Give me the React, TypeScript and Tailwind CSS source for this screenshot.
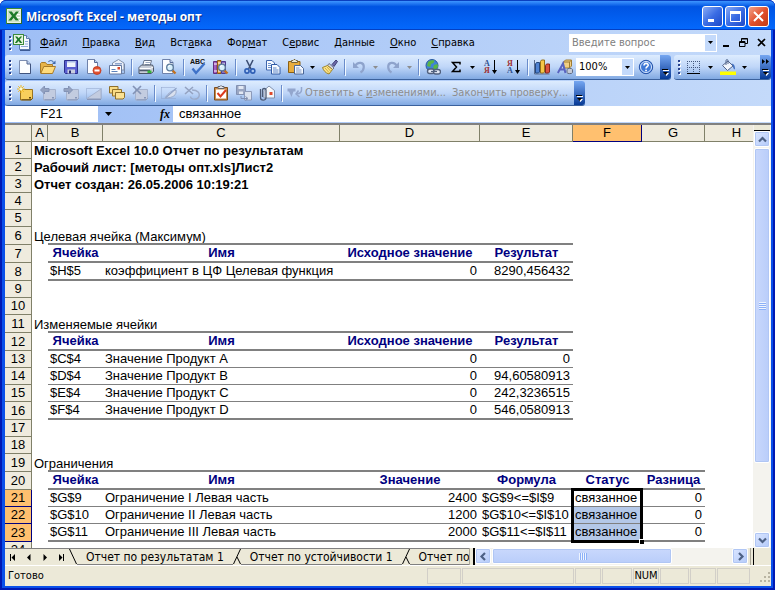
import type { ReactNode } from 'react';
import { clsx } from 'clsx';

type Line = 'none' | 'thin' | 'thick';
type Cell = { text: string; align?: 'left' | 'center' | 'right'; head?: boolean; bold?: boolean };
type Row = {
  n: number;
  tall?: boolean;
  line?: Line;
  until?: string;
  cells?: Record<string, Cell>;
};

const COLUMNS = [
  { id: 'A', width: 'w-4' },
  { id: 'B', width: 'w-[55px]' },
  { id: 'C', width: 'w-[237px]' },
  { id: 'D', width: 'w-[140px]' },
  { id: 'E', width: 'w-[93px]' },
  { id: 'F', width: 'w-[69px]' },
  { id: 'G', width: 'w-[63px]' },
  { id: 'H', width: 'w-16' },
];

const title = (text: string): Record<string, Cell> => ({ A: { text, bold: true } });
const section = (text: string): Record<string, Cell> => ({ A: { text } });
const head = (text: string): Cell => ({ text, head: true, align: 'center' });
const num = (text: string): Cell => ({ text, align: 'right' });

const resultHead = {
  B: head('Ячейка'),
  C: head('Имя'),
  D: head('Исходное значение'),
  E: head('Результат'),
};

const ROWS: Row[] = [
  { n: 1, cells: title('Microsoft Excel 10.0 Отчет по результатам') },
  { n: 2, cells: title('Рабочий лист: [методы опт.xls]Лист2') },
  { n: 3, cells: title('Отчет создан: 26.05.2006 10:19:21') },
  { n: 4 },
  { n: 5 },
  { n: 6, tall: true, line: 'thick', until: 'E', cells: section('Целевая ячейка (Максимум)') },
  { n: 7, tall: true, line: 'thick', until: 'E', cells: resultHead },
  {
    n: 8,
    tall: true,
    line: 'thick',
    until: 'E',
    cells: { B: { text: '$H$5' }, C: { text: 'коэффициент в ЦФ Целевая функция' }, D: num('0'), E: num('8290,456432') },
  },
  { n: 9 },
  { n: 10 },
  { n: 11, tall: true, line: 'thick', until: 'E', cells: section('Изменяемые ячейки') },
  { n: 12, tall: true, line: 'thick', until: 'E', cells: resultHead },
  {
    n: 13,
    line: 'thin',
    until: 'E',
    cells: { B: { text: '$C$4' }, C: { text: 'Значение Продукт A' }, D: num('0'), E: num('0') },
  },
  {
    n: 14,
    line: 'thin',
    until: 'E',
    cells: { B: { text: '$D$4' }, C: { text: 'Значение Продукт B' }, D: num('0'), E: num('94,60580913') },
  },
  {
    n: 15,
    line: 'thin',
    until: 'E',
    cells: { B: { text: '$E$4' }, C: { text: 'Значение Продукт C' }, D: num('0'), E: num('242,3236515') },
  },
  {
    n: 16,
    tall: true,
    line: 'thick',
    until: 'E',
    cells: { B: { text: '$F$4' }, C: { text: 'Значение Продукт D' }, D: num('0'), E: num('546,0580913') },
  },
  { n: 17 },
  { n: 18 },
  { n: 19, tall: true, line: 'thick', until: 'G', cells: section('Ограничения') },
  {
    n: 20,
    tall: true,
    line: 'thick',
    until: 'G',
    cells: {
      B: head('Ячейка'),
      C: head('Имя'),
      D: head('Значение'),
      E: head('Формула'),
      F: head('Статус'),
      G: head('Разница'),
    },
  },
  {
    n: 21,
    line: 'thin',
    until: 'G',
    cells: {
      B: { text: '$G$9' },
      C: { text: 'Ограничение I Левая часть' },
      D: num('2400'),
      E: { text: '$G$9<=$I$9' },
      F: { text: 'связанное' },
      G: num('0'),
    },
  },
  {
    n: 22,
    line: 'thin',
    until: 'G',
    cells: {
      B: { text: '$G$10' },
      C: { text: 'Ограничение II Левая часть' },
      D: num('1200'),
      E: { text: '$G$10<=$I$10' },
      F: { text: 'связанное' },
      G: num('0'),
    },
  },
  {
    n: 23,
    tall: true,
    line: 'thick',
    until: 'G',
    cells: {
      B: { text: '$G$11' },
      C: { text: 'Ограничение III Левая часть' },
      D: num('2000'),
      E: { text: '$G$11<=$I$11' },
      F: { text: 'связанное' },
      G: num('0'),
    },
  },
  { n: 24 },
];

const MENU = [
  ['', 'Ф', 'айл'],
  ['', 'П', 'равка'],
  ['', 'В', 'ид'],
  ['Вст', 'а', 'вка'],
  ['Фор', 'м', 'ат'],
  ['С', 'е', 'рвис'],
  ['', 'Д', 'анные'],
  ['', 'О', 'кно'],
  ['', 'С', 'правка'],
];

const Icon = ({ children }: { children: ReactNode }) => (
  <svg viewBox="0 0 16 16" className="size-4 shrink-0" fill="none" aria-hidden="true">
    {children}
  </svg>
);

const Lens = () => (
  <>
    <path d="M11.5 11.5l3 3" stroke="#c07020" strokeWidth="2.4" />
    <circle cx="9" cy="8.5" r="3.3" fill="#d8f0fc" stroke="#5a7898" strokeWidth="1.3" />
    <path d="M7.3 8a2 2 0 0 1 1.7-1.5" stroke="#fff" />
  </>
);

const ExcelLogo = () => (
  <svg viewBox="0 0 16 16" className="size-4 shrink-0" fill="none" aria-hidden="true">
    <rect x=".5" y=".5" width="15" height="15" fill="#e9f4e4" stroke="#3f8a3a" />
    <path d="M2 14V2h12v12z" fill="#cfe3c8" />
    <path d="M10 4h4M10.500 6.500h3.500M11 9.500h3M10 12.500h4" stroke="#fff" />
    <path d="M2.500 3.500h3.300l2 2.700 2.200-2.700h3l-3.600 4.500 3.600 4.600H9.800L7.600 9.800 5.400 12.600H2.300L6 8z" fill="#1f7a2a" />
    <path d="M1 15.500h14.500V1" stroke="#2c662c" />
  </svg>
);

const WorkbookIcon = () => (
  <svg viewBox="0 0 18 17" className="h-[17px] w-[18px] shrink-0" fill="none" aria-hidden="true">
    <path d="M6.500 1.500h7l3 3v11h-10z" fill="#f4f8ff" stroke="#5a7ab0" />
    <path d="M13.500 1.500v3h3" fill="#c5d8f2" stroke="#5a7ab0" />
    <path d="M8 12.500h7M12 7.500h3M12 10h3" stroke="#90acd8" />
    <path d="M17 5v11.500H7" stroke="#3c5a94" />
    <rect x=".5" y=".5" width="10" height="10" fill="#e6f3df" stroke="#3c8a3c" />
    <path d="M2 2.500h2.200l1.500 1.700 1.500-1.700h2L6.700 5.500 9.300 9H7L5.500 7 4 9H1.800l2.500-3.500z" fill="#1f7a2a" />
  </svg>
);

const NewIcon = () => (
  <Icon>
    <path d="M2.500 1.500h7.500l3.500 3.500v9.500h-11z" fill="#fdfeff" stroke="#7c8db0" />
    <path d="M13.500 5v9.500h-11" stroke="#40547e" />
    <path d="M10 1.500V5h3.500" fill="#b9cdec" stroke="#50658f" />
  </Icon>
);

const OpenIcon = () => (
  <Icon>
    <path d="M.5 14V4.500l1-1h4l1.500 2h5.500V8" fill="#e7b44a" stroke="#a87b28" />
    <path d="M.8 14.500L3.800 7.500h11.700L12.500 14.500z" fill="#ffdb7c" stroke="#a87b28" />
    <path d="M8.500 3c1-2 4-2.200 5 .5" stroke="#4f79b8" strokeWidth="1.200" />
    <path d="M15.500 1.500v3.500H12z" fill="#3f68aa" />
  </Icon>
);

const SaveIcon = () => (
  <Icon>
    <path d="M1.500 1.500h13v13h-12l-1-1z" fill="#5a5fd0" stroke="#2a2e8c" />
    <path d="M4 2h8.500v6H4z" fill="#eef3fb" />
    <path d="M4 2h8.500v1.500H4z" fill="#a9bbe6" />
    <path d="M4.500 10.500h7.500v4H4.500z" fill="#c9cfe0" />
    <path d="M6 11.500h2v3H6z" fill="#272a70" />
  </Icon>
);

const PermissionIcon = () => (
  <Icon>
    <path d="M1.500.5h7l3 3v11h-10z" fill="#fcfdff" stroke="#6f82aa" />
    <path d="M8.500.5v3h3" fill="#c2d3ee" stroke="#566b98" />
    <circle cx="11" cy="11.500" r="4" fill="#e2502e" stroke="#c03a1c" strokeWidth=".8" />
    <path d="M8.500 11.500h5" stroke="#fff" strokeWidth="1.800" />
  </Icon>
);

const MailIcon = () => (
  <Icon>
    <path d="M3.500 6V4L9.500.5l5.500 3.500v7H9" fill="#eef2f9" stroke="#8090ab" />
    <path d="M6 4.500h7M6 6h7" stroke="#8fa5cc" />
    <path d="M.5 6.500h12v8.500H.5z" fill="#fff" stroke="#65799f" />
    <path d="M8.500 8h2.500v2.500H8.500z" fill="#d8452a" />
    <path d="M2.500 10.500h4M2.500 12.500h6" stroke="#5d82bb" />
    <path d="M13 14.500h2.500V5" stroke="#7487a8" />
  </Icon>
);

const PrintIcon = () => (
  <Icon>
    <path d="M4.500 7L6 1.500h7.500L12 7z" fill="#fff" stroke="#68758c" />
    <path d="M7.500 3.500H12M7 5.500h4.500" stroke="#9cabc4" />
    <path d="M1 8.500l2.500-2.500h11l1 2.500v4l-2.500 2H1z" fill="#c9ced8" stroke="#4b5567" />
    <path d="M1.500 9.500h11l2.500-1.500" stroke="#fff" />
    <path d="M1.500 11.500H12" stroke="#4d586b" strokeWidth="1.500" />
    <path d="M9.500 11.500h4v2.500h-4z" fill="#35b53a" />
  </Icon>
);

const PreviewIcon = () => (
  <Icon>
    <path d="M1.500.5h7.500l3 3v11H1.500z" fill="#fcfdff" stroke="#6f82aa" />
    <path d="M9 .5v3h3" fill="#c2d3ee" stroke="#566b98" />
    <Lens />
  </Icon>
);

const SpellIcon = () => (
  <Icon>
    <text x="0" y="5" fontSize="7" fontWeight="bold" fontFamily="Liberation Sans, sans-serif" fill="#111">
      ABC
    </text>
    <path d="M2.500 9.500l3.500 4.500L14.500 4.500" stroke="#3f72c8" strokeWidth="2.400" />
  </Icon>
);

const ResearchIcon = () => (
  <Icon>
    <path d="M.5 2.500h3.500v12H.5z" fill="#a65fbf" stroke="#5f2f7c" />
    <path d="M4.500 1.500h3.500v13H4.500z" fill="#e9a13b" stroke="#8e5a17" />
    <path d="M8.500 2.500h4v12h-4z" fill="#8a6fc0" stroke="#4c3a8f" />
    <path d="M1 5h3M5 4h3M9 5h3M1 12h3M5 12h3" stroke="#fff" />
    <Lens />
  </Icon>
);

const CutIcon = () => (
  <Icon>
    <path d="M4.500 1l4.500 9M11 1L6.500 10" stroke="#3e5075" strokeWidth="1.600" />
    <circle cx="5" cy="12" r="2.100" stroke="#2f5fb5" strokeWidth="1.600" />
    <circle cx="10.800" cy="12" r="2.100" stroke="#2f5fb5" strokeWidth="1.600" />
  </Icon>
);

const CopyIcon = () => (
  <Icon>
    <path d="M1.500 1.500h5.500l2.500 2.500v7h-8z" fill="#f8fbff" stroke="#3e66ad" />
    <path d="M3 4.500h3M3 6.500h4M3 8.500h4" stroke="#6e93cf" />
    <path d="M6.500 5.500h5.500l3 3v6.500h-8.500z" fill="#f8fbff" stroke="#2f5aa5" />
    <path d="M8 9h3.500M8 11h5.500M8 13h5.500" stroke="#5b84c7" />
  </Icon>
);

const PasteIcon = () => (
  <Icon>
    <path d="M.5 2.500h11.500v11H.5z" fill="#e8ac3c" stroke="#8b6014" />
    <path d="M3.500 3.500v-2h1.500L6 .5h1l1 1h1.500v2z" fill="#f1ecd6" stroke="#76653a" />
    <path d="M6.500 6.500h6l3 3v5.500h-9z" fill="#f5f9ff" stroke="#4b6797" />
    <path d="M8 9h3.500M8 11h5.500M8 13h5.500" stroke="#7c98c6" />
  </Icon>
);

const PainterIcon = () => (
  <Icon>
    <path d="M10 5.500l4-4.500 1.500 1.500-3.500 5z" fill="#6c6aa8" stroke="#3d3c74" />
    <path d="M7 4.500l5 4.500-1.500 1.500-5-4z" fill="#d9dce8" stroke="#6d7186" />
    <path d="M5.500 6.500L.5 8.500c1 3 3 5.500 6.500 6.500l3.500-4.500z" fill="#fbe48b" stroke="#a08425" />
    <path d="M3 9l4 4.500M5 8l3.500 4" stroke="#d1ab3d" />
  </Icon>
);

const UndoIcon = ({ flip }: { flip?: boolean }) => (
  <Icon>
    <g transform={flip ? 'translate(16 0) scale(-1 1)' : undefined}>
      <path d="M4.500 6.500C7 2.500 13 3 12.800 8c-.1 2.800-1.600 4.500-3.300 5.500" stroke="#8ea3cc" strokeWidth="2.200" />
      <path d="M2 3v6h6z" fill="#8ea3cc" />
    </g>
  </Icon>
);

const LinkIcon = () => (
  <Icon>
    <circle cx="7" cy="6.500" r="6" fill="#3f83d8" stroke="#285a9e" />
    <path d="M3 3c2-2 5-2 6.500-1.500L8.500 4 6 5 5.500 8 2 7zM9 6l3.500-1 .5 3-2.500 3L8 9z" fill="#58b548" />
    <rect x="2.500" y="10" width="7" height="4.500" rx="2.200" stroke="#51617e" strokeWidth="1.400" fill="#e3e9f5" />
    <rect x="8.500" y="10.500" width="7" height="4.500" rx="2.200" stroke="#51617e" strokeWidth="1.400" fill="#e3e9f5" />
    <path d="M6 12.500h6" stroke="#51617e" strokeWidth="1.200" />
  </Icon>
);

const SigmaIcon = () => (
  <Icon>
    <path d="M12 5.500V3.500H4.500l4 4.500-4 4.500H12v-2" stroke="#000" strokeWidth="1.500" />
  </Icon>
);

const SortIcon = ({ desc }: { desc?: boolean }) => (
  <Icon>
    <g fontSize="8" fontWeight="bold" fontFamily="Liberation Serif, serif">
      <text x="2" y="7" fill={desc ? '#a03030' : '#30508f'}>
        {desc ? 'Я' : 'А'}
      </text>
      <text x="2" y="14" fill={desc ? '#30508f' : '#a03030'}>
        {desc ? 'А' : 'Я'}
      </text>
    </g>
    <path d="M12.500 1v12" stroke="#000" />
    <path d="M10 11h5l-2.500 4z" fill="#000" />
  </Icon>
);

const ChartIcon = () => (
  <Icon>
    <path d="M.5 1v14h15" stroke="#5d6e8f" />
    <path d="M1.500 5l1-1.500h3V13l-1 1h-3z" fill="#4f82d2" stroke="#25487f" />
    <path d="M6.500 2.500l1-1.500h3v12l-1 1h-3z" fill="#f5c648" stroke="#96701a" />
    <path d="M11.500 6.500l1-1.500h3v8l-1 1h-3z" fill="#dc5340" stroke="#87261a" />
  </Icon>
);

const DrawingIcon = () => (
  <Icon>
    <path d="M6.500 3l2-2h6v6l-2 2h-6z" fill="#f2cf83" stroke="#a07c31" />
    <path d="M6.500 3h6v6M12.500 3l2-2" stroke="#a07c31" />
    <path d="M10 10.500c0-1.500 5.500-1.500 5.500 0v3c0 1.500-5.500 1.500-5.500 0z" fill="#c5cbd8" stroke="#616c83" />
    <path d="M.8 14L6 4.500 8.500 14M3 10.500h5" stroke="#5a63c0" strokeWidth="2" />
  </Icon>
);

const HelpIcon = () => (
  <Icon>
    <circle cx="8" cy="8" r="6.700" fill="#3e78d6" stroke="#2553a8" />
    <circle cx="8" cy="8" r="5.500" stroke="#dce9fc" />
    <path d="M6 6.500c0-3 4.300-2.500 4.200-.3C10.100 7.600 8 7.800 8 9.500" stroke="#fff" strokeWidth="1.600" />
    <path d="M7.200 10.700h1.700v1.600H7.200z" fill="#fff" />
  </Icon>
);

const BordersIcon = () => (
  <Icon>
    <path d="M1.500 2v12M7.500 2v12M13.500 2v12M1 2.500h13M1 8.500h13" stroke="#44597f" strokeDasharray="1 1" />
    <path d="M1 14.500h13" stroke="#000" />
  </Icon>
);

const FillIcon = () => (
  <Icon>
    <path d="M2.500 6.500L8 2l5 5-5.500 4.500z" fill="#f1f5fc" stroke="#53658a" />
    <path d="M6 6V1.500C6 .3 8 .3 8 1.500V5" stroke="#53658a" />
    <path d="M11.500 4.500c3 .5 3.500 2.500 3.500 6-1.500-.5-2-1.500-2-3.500z" fill="#3f6fc2" />
    <path d="M0 12.500h16v3.500H0z" fill="#ffff00" />
  </Icon>
);

// comment card used by the review toolbar, greyed out when the command is off
const Card = ({ off, children }: { off?: boolean; children?: ReactNode }) => (
  <Icon>
    <path
      d="M3.500 4.500h12v9l-1.500 1.500h-10.500z"
      fill={off ? '#c3cce0' : '#f7cf5c'}
      stroke={off ? '#a5b2cd' : '#9a7420'}
    />
    <path d="M4.500 14.800h9.500l1.500-1.500" stroke={off ? '#8796b8' : '#5e4510'} />
    <path d="M12 12h2v1.500h-2z" fill={off ? '#8796b8' : '#5e4510'} />
    {children}
  </Icon>
);

const NewNoteIcon = () => (
  <Card>
    <path d="M4 0v8M0 4h8M1.200 1.200l5.600 5.600M6.800 1.200L1.200 6.800" stroke="#f0b820" />
    <circle cx="4" cy="4" r="1.500" fill="#fffbd0" />
  </Card>
);

const PrevNoteIcon = ({ next }: { next?: boolean }) => (
  <Card off>
    <path d={next ? 'M9.500 5L5.500 1v2.500H1v3h4.500V9z' : 'M.5 5l4-4v2.500H9v3H4.500V9z'} fill="#94a2c0" stroke="#8393b5" />
  </Card>
);

const ShowNoteIcon = () => (
  <Icon>
    <path d="M.5 3.500h15v10H.5z" stroke="#8fa3c8" strokeDasharray="1 1" />
    <path d="M1 13.500L15 4v9.500z" fill="#c3cce0" stroke="#a5b2cd" />
    <path d="M1 14.500h14" stroke="#8796b8" />
  </Icon>
);

const AllNotesIcon = () => (
  <Icon>
    <path d="M.5 1.500h8.500v5l-1.500 1.500H.5z" fill="#f9dc85" stroke="#8f702a" />
    <path d="M3.500 4.500h9v5l-1.500 1.500h-7.500z" fill="#f9dc85" stroke="#8f702a" />
    <path d="M6.500 7.500h9v5l-1.500 1.500h-7.500z" fill="#fbe294" stroke="#8f702a" />
  </Icon>
);

const DeleteNoteIcon = () => (
  <Card off>
    <path d="M1 1l8 8M9 1L1 9" stroke="#8393b5" strokeWidth="1.700" />
  </Card>
);

const InkIcon = () => (
  <Icon>
    <path d="M.5 2.500h14M.5 2.500v11h14" stroke="#8fa3c8" strokeDasharray="1 1" />
    <path d="M4 13c4-6 8-8 11-8 1 5-3 8-11 8z" fill="#d9e0ee" stroke="#9cabc9" />
    <path d="M5 12.500L15.500 3" stroke="#8fa3c8" strokeWidth="1.200" />
  </Icon>
);

const EraseInkIcon = () => (
  <Icon>
    <path d="M1 2l8 7M9 2L1 9" stroke="#94a2c0" strokeWidth="1.600" />
    <path d="M8 5c6 0 8 3 7 6.500S7 15 6.500 11.500" stroke="#9cabc9" strokeWidth="1.400" />
  </Icon>
);

const TaskIcon = () => (
  <Icon>
    <path d="M1.500 2.500h13v12.500h-13z" fill="#cc8c48" stroke="#7c4d1e" />
    <path d="M3 4.500h10v9H3z" fill="#fff" />
    <path d="M5 3.500v-2h2L8 .5l1 1h2v2z" fill="#e6e6ea" stroke="#65656e" />
    <path d="M4.500 8l3 3.500L13 5" stroke="#dc3a1e" strokeWidth="2" />
  </Icon>
);

const SaveVersionIcon = () => (
  <Icon>
    <path d="M.5.500h9v9h-9z" fill="#9aa6c2" stroke="#8291b2" />
    <path d="M2.500 1h5v3h-5zM3 6.500h4V9H3z" fill="#e2e8f3" />
    <path d="M8.500 6.500h7V15h-7z" fill="#d9e1ef" stroke="#8c9aba" />
    <path d="M5 11v2.500h6M9.500 11.500l2.500 2-2.500 2" stroke="#7f8eb0" />
  </Icon>
);

const AttachIcon = () => (
  <Icon>
    <path d="M5 5.500L10 1l5.500 4.500V13H5z" fill="#f4f7fb" stroke="#8090ab" />
    <path d="M10.500 7h3v3h-3z" fill="#df4a2c" />
    <path d="M1.500 4v8.500c0 3.500 5.500 3.500 5.500 0V5c0-2-3.500-2-3.500 0v7" stroke="#4c5b76" strokeWidth="1.300" />
  </Icon>
);

const ReplyIcon = () => (
  <Icon>
    <path d="M.5 3.500h8v3H6.500L4.500 12 2 6.500H.5z" fill="#93a6cd" />
    <path d="M14.500 2v3c0 2.500-1.500 3.500-5 4M11.500 5.500L9 9l3.500 3" stroke="#93a6cd" strokeWidth="1.500" />
  </Icon>
);

const Arrow = ({ className }: { className?: string }) => (
  <svg viewBox="0 0 5 3" className={clsx('h-[3px] w-[5px] shrink-0', className)} aria-hidden="true">
    <path d="M0 0h5L2.500 3z" fill="currentColor" />
  </svg>
);

const Tool = ({ label, off, children }: { label: string; off?: boolean; children: ReactNode }) => (
  <button type="button" aria-label={label} disabled={off} className="flex h-full w-[23px] shrink-0 items-center justify-center">
    {children}
  </button>
);

const DropArrow = ({ label, off }: { label: string; off?: boolean }) => (
  <button
    type="button"
    aria-label={label}
    disabled={off}
    className={clsx('flex h-full w-[11px] shrink-0 items-center justify-center', off ? 'text-[#8d8d8d]' : 'text-black')}
  >
    <Arrow />
  </button>
);

const Grip = () => (
  <div className="ml-1 flex w-1 shrink-0 flex-col gap-[2px]">
    {[0, 1, 2, 3].map((i) => (
      <span key={i} className="size-[2px] bg-[#27418e] shadow-[1px_1px_0_#fff]" />
    ))}
  </div>
);

const Separator = () => (
  <div className="flex w-[6px] shrink-0 justify-center">
    <span className="h-4 w-px bg-[#6a8ccb] shadow-[1px_1px_0_#f1f9ff]" />
  </div>
);

const ToolbarEnd = ({ more }: { more?: boolean }) => (
  <button
    type="button"
    aria-label="Параметры панелей инструментов"
    className="ml-auto flex h-full w-[11px] shrink-0 flex-col items-center justify-between rounded-r-[3px] bg-linear-to-b from-[#75a6f1] to-[#053995] pt-1 pb-[3px]"
  >
    <svg viewBox="0 0 7 5" className="h-[5px] w-[7px]" aria-hidden="true">
      {more && <path d="M0 0l3 2.500L0 5zM4 0l3 2.500L4 5z" fill="#000" />}
    </svg>
    <svg viewBox="0 0 7 7" className="size-[7px]" aria-hidden="true">
      <path d="M1 1h6v1H1zM2 4h5L4.500 7z" fill="#fff" />
      <path d="M0 0h6v1H0zM1 3h5L3.500 6z" fill="#000" />
    </svg>
  </button>
);

const Toolbar = ({ className, children }: { className?: string; children: ReactNode }) => (
  <div
    className={clsx(
      'flex h-[25px] items-center rounded-[3px] border-b border-[#3b619c] bg-linear-to-b from-[#ddecfe] via-[#bfd6f8] to-[#81a9e2]',
      className
    )}
  >
    {children}
  </div>
);

const CaptionButton = ({ label, close, children }: { label: string; close?: boolean; children: ReactNode }) => (
  <button
    type="button"
    aria-label={label}
    className={clsx(
      'flex size-[21px] items-center justify-center rounded-[3px] border border-white',
      close ? 'bg-linear-to-br from-[#f0a088] via-[#e2502c] to-[#c03a14]' : 'bg-linear-to-br from-[#8aaaf4] via-[#3a6ce4] to-[#1d48c8]'
    )}
  >
    <svg viewBox="0 0 13 13" className="size-[13px]" fill="none" stroke="#fff" aria-hidden="true">
      {children}
    </svg>
  </button>
);

const TitleBar = () => (
  <header className="flex h-[30px] shrink-0 items-center rounded-t-[6px] border-t border-b border-t-[#0a3fc0] border-b-[#0340c4] bg-linear-to-b from-[#3d95ff] via-[#0054e3] via-20% to-[#0468fc] px-[6px] pt-[2px]">
    <ExcelLogo />
    <h1 className="ml-1 pt-px font-['Open_Sans','Noto_Sans',sans-serif] text-[12px] leading-4 font-bold whitespace-nowrap text-white [text-shadow:1px_1px_0_#0a2a80]">
      Microsoft Excel - методы опт
    </h1>
    <div className="ml-auto flex gap-[2px]">
      <CaptionButton label="Свернуть">
        <path d="M2 10.500h6" strokeWidth="3" />
      </CaptionButton>
      <CaptionButton label="Развернуть">
        <path d="M1.500 2v9.500h10V2" />
        <path d="M1 2.500h11" strokeWidth="3" />
      </CaptionButton>
      <CaptionButton label="Закрыть" close>
        <path d="M2 2l9 9M11 2l-9 9" strokeWidth="2" />
      </CaptionButton>
    </div>
  </header>
);

const MenuBar = () => (
  <nav className="flex h-[25px] items-center">
    <Grip />
    <div className="flex items-center gap-[15px]">
      <div className="-mr-[6px]">
        <WorkbookIcon />
      </div>
      {MENU.map(([before, key, after]) => (
        <button key={before + key + after} type="button" className="leading-4 whitespace-nowrap">
          {before}
          <u>{key}</u>
          {after}
        </button>
      ))}
    </div>
    <div className="ml-auto flex h-[18px] w-[148px] items-center bg-white pr-px">
      <input
        aria-label="Введите вопрос"
        placeholder="Введите вопрос"
        className="min-w-0 flex-1 bg-transparent pl-[3px] leading-4 outline-none placeholder:text-[#808080]"
      />
      <button type="button" aria-label="Список вопросов" className="flex h-4 w-[11px] items-center justify-center bg-[#c4dafb]">
        <Arrow />
      </button>
    </div>
    <div className="flex w-[54px] shrink-0 items-center justify-between pr-[5px] pl-[6px]">
      <button type="button" aria-label="Свернуть окно">
        <svg viewBox="0 0 7 9" className="h-[9px] w-[7px]" aria-hidden="true">
          <path d="M0 7h6v2H0z" />
        </svg>
      </button>
      <button type="button" aria-label="Восстановить окно">
        <svg viewBox="0 0 9 9" className="size-[9px]" fill="none" stroke="#000" aria-hidden="true">
          <path d="M2.500 3V.5h6v5H6M2.500 1h6M.5 3.500h5.500v5H.5zM.5 4.500h5.500" />
        </svg>
      </button>
      <button type="button" aria-label="Закрыть окно">
        <svg viewBox="0 0 9 9" className="size-[9px]" fill="none" stroke="#000" aria-hidden="true">
          <path d="M1 1l7 7M8 1L1 8" strokeWidth="1.700" />
        </svg>
      </button>
    </div>
  </nav>
);

const StandardToolbar = () => (
  <div className="flex gap-[3px]">
    <Toolbar className="w-[666px]">
      <Grip />
      <Tool label="Создать"><NewIcon /></Tool>
      <Tool label="Открыть"><OpenIcon /></Tool>
      <Tool label="Сохранить"><SaveIcon /></Tool>
      <Tool label="Разрешения"><PermissionIcon /></Tool>
      <Tool label="Сообщение"><MailIcon /></Tool>
      <Separator />
      <Tool label="Печать"><PrintIcon /></Tool>
      <Tool label="Предварительный просмотр"><PreviewIcon /></Tool>
      <Separator />
      <Tool label="Орфография"><SpellIcon /></Tool>
      <Tool label="Справочные материалы"><ResearchIcon /></Tool>
      <Separator />
      <Tool label="Вырезать"><CutIcon /></Tool>
      <Tool label="Копировать"><CopyIcon /></Tool>
      <Tool label="Вставить"><PasteIcon /></Tool>
      <DropArrow label="Параметры вставки" />
      <Tool label="Формат по образцу"><PainterIcon /></Tool>
      <Separator />
      <Tool label="Отменить" off><UndoIcon /></Tool>
      <DropArrow label="Список отмены" off />
      <Tool label="Вернуть" off><UndoIcon flip /></Tool>
      <DropArrow label="Список возврата" off />
      <Separator />
      <Tool label="Гиперссылка"><LinkIcon /></Tool>
      <Tool label="Автосумма"><SigmaIcon /></Tool>
      <DropArrow label="Функции" />
      <Tool label="Сортировка по возрастанию"><SortIcon /></Tool>
      <Tool label="Сортировка по убыванию"><SortIcon desc /></Tool>
      <Separator />
      <Tool label="Мастер диаграмм"><ChartIcon /></Tool>
      <Tool label="Рисование"><DrawingIcon /></Tool>
      <div className="flex h-[18px] w-[58px] shrink-0 items-center bg-white pr-px">
        <input aria-label="Масштаб" defaultValue="100%" className="w-0 flex-1 bg-transparent pl-[3px] leading-4 outline-none" />
        <button type="button" aria-label="Список масштабов" className="flex h-4 w-[11px] items-center justify-center bg-[#c4dafb]">
          <Arrow />
        </button>
      </div>
      <Tool label="Справка"><HelpIcon /></Tool>
      <ToolbarEnd />
    </Toolbar>
    <Toolbar className="flex-1">
      <Grip />
      <Tool label="Границы"><BordersIcon /></Tool>
      <DropArrow label="Виды границ" />
      <Tool label="Цвет заливки"><FillIcon /></Tool>
      <DropArrow label="Список цветов" />
      <ToolbarEnd more />
    </Toolbar>
  </div>
);

const ReviewToolbar = () => (
  <Toolbar className="w-[580px]">
    <Grip />
    <Tool label="Создать примечание"><NewNoteIcon /></Tool>
    <Tool label="Предыдущее примечание" off><PrevNoteIcon /></Tool>
    <Tool label="Следующее примечание" off><PrevNoteIcon next /></Tool>
    <Tool label="Показать примечание" off><ShowNoteIcon /></Tool>
    <Tool label="Показать все примечания"><AllNotesIcon /></Tool>
    <Tool label="Удалить примечание" off><DeleteNoteIcon /></Tool>
    <Separator />
    <Tool label="Показать рукописные примечания" off><InkIcon /></Tool>
    <Tool label="Удалить рукописные примечания" off><EraseInkIcon /></Tool>
    <Separator />
    <Tool label="Создать задачу"><TaskIcon /></Tool>
    <Tool label="Обновить файл" off><SaveVersionIcon /></Tool>
    <Tool label="Отправить как вложение"><AttachIcon /></Tool>
    <Separator />
    <button type="button" disabled className="flex items-center pl-[3px] leading-4 whitespace-nowrap text-[#8d8d8d]">
      <ReplyIcon />
      <span className="pl-[2px]">
        Ответить с <u>и</u>зменениями...
      </span>
    </button>
    <button type="button" disabled className="pl-[6px] leading-4 whitespace-nowrap text-[#8d8d8d]">
      Закон<u>ч</u>ить проверку...
    </button>
    <ToolbarEnd />
  </Toolbar>
);

const FormulaBar = () => (
  <div className="flex h-4 items-stretch font-['Liberation_Sans',Arial,sans-serif] text-[13px]">
    <input
      aria-label="Имя ячейки"
      defaultValue="F21"
      className="w-[93px] shrink-0 bg-white text-center leading-4 outline-none"
    />
    <button type="button" aria-label="Список имен" className="flex w-5 items-center justify-center">
      <svg viewBox="0 0 7 4" className="h-1 w-[7px]" aria-hidden="true">
        <path d="M0 0h7L3.500 4z" />
      </svg>
    </button>
    <button
      type="button"
      aria-label="Вставка функции"
      className="w-[55px] pr-[3px] text-right font-['Liberation_Serif',serif] text-[12px] leading-4 font-bold italic"
    >
      fx
    </button>
    <input
      aria-label="Строка формул"
      defaultValue="связанное"
      className="min-w-0 flex-1 bg-white pl-[6px] leading-4 outline-none"
    />
  </div>
);

const SheetCell = ({ row, col }: { row: Row; col: string }) => {
  const cell = row.cells?.[col];
  const ruled = row.until !== undefined && col !== 'A' && col <= row.until;
  const selected = col === 'F' && row.n >= 21 && row.n <= 23;
  return (
    <td
      className={clsx(
        'relative p-0 align-bottom leading-4 whitespace-nowrap',
        ruled && row.line === 'thick' && 'border-b-2 border-[#808080]',
        ruled && row.line === 'thin' && 'border-b border-[#808080]',
        cell?.align === 'right' && 'pr-[3px] text-right',
        cell?.align === 'center' && 'text-center',
        !cell?.align && 'pl-[2px]',
        cell?.bold && 'font-bold',
        cell?.head && 'font-bold text-[#000080]',
        selected && row.n > 21 && 'bg-[#b4c8e8]'
      )}
    >
      {cell?.text}
      {/* frame of the selected range F21:F23 hangs from its first cell */}
      {selected && row.n === 21 && (
        <div className="pointer-events-none absolute -top-[2px] -left-[2px] z-10 h-[55px] w-[72px] border-[3px] border-black">
          <span className="absolute -right-[4px] -bottom-[4px] size-[5px] border-t border-l border-white bg-black" />
        </div>
      )}
    </td>
  );
};

const Sheet = () => (
  <div className="min-h-0 min-w-0 flex-1 overflow-hidden bg-white">
    <table className="w-[764px] table-fixed border-separate border-spacing-0 font-['Liberation_Sans',Arial,sans-serif] text-[13px] text-black">
      <thead>
        <tr className="h-[17px]">
          <th className="w-[27px] border-r border-b border-[#808069] bg-[#efebde] p-0" aria-label="Выделить все" />
          {COLUMNS.map(({ id, width }) => (
            <th
              key={id}
              scope="col"
              className={clsx(
                'border-r border-b p-0 text-center leading-4 font-normal',
                width,
                id === 'F' ? 'border-[#000080] bg-[#ffc06f]' : 'border-[#808069] bg-[#efebde]'
              )}
            >
              {id}
            </th>
          ))}
        </tr>
      </thead>
      <tbody>
        {ROWS.map((row) => (
          <tr key={row.n} className={row.tall ? 'h-[18px]' : 'h-[17px]'}>
            <th
              scope="row"
              className={clsx(
                'border-r border-b p-0 text-center leading-4 font-normal',
                row.n >= 21 && row.n <= 23 ? 'border-[#000080] bg-[#ffc06f]' : 'border-[#808069] bg-[#efebde]'
              )}
            >
              {row.n}
            </th>
            {COLUMNS.map(({ id }) => (
              <SheetCell key={id} row={row} col={id} />
            ))}
          </tr>
        ))}
      </tbody>
    </table>
  </div>
);

const ScrollButton = ({ label, d }: { label: string; d: string }) => (
  <button
    type="button"
    aria-label={label}
    className="flex size-4 shrink-0 items-center justify-center rounded-[2px] border border-white bg-linear-to-br from-[#dbe6ff] to-[#b4caf9] shadow-[inset_0_0_0_1px_#b0c6f4]"
  >
    <svg viewBox="0 0 9 9" className="size-[9px]" fill="none" stroke="#4d6185" strokeWidth="2.200" aria-hidden="true">
      <path d={d} />
    </svg>
  </button>
);

const VerticalScroll = () => (
  <div className="flex w-[18px] shrink-0 flex-col bg-[#f4f3ee] px-px">
    <div className="h-[6px] shrink-0 border-b border-black bg-[#ece9d8]" />
    <ScrollButton label="Вверх" d="M1 6.500L4.500 3 8 6.500" />
    <div className="flex min-h-0 flex-1 flex-col pt-px">
      <div className="flex basis-[82%] flex-col items-center justify-center gap-px rounded-[2px] border border-white bg-linear-to-r from-[#c9d8fc] to-[#b9cdfa] shadow-[inset_0_0_0_1px_#b0c6f4]">
        {[0, 1, 2, 3].map((i) => (
          <span key={i} className="h-px w-[7px] bg-[#eef4fe] shadow-[0_1px_0_#8cb0f8]" />
        ))}
      </div>
    </div>
    <ScrollButton label="Вниз" d="M1 2.500L4.500 6 8 2.500" />
  </div>
);

const NavButton = ({ label, d }: { label: string; d: string }) => (
  <button type="button" aria-label={label} className="flex w-4 shrink-0 items-center justify-center">
    <svg viewBox="0 0 8 7" className="h-[7px] w-2" aria-hidden="true">
      <path d={d} />
    </svg>
  </button>
);

const TabEdge = ({ first }: { first?: boolean }) => (
  <svg viewBox="0 0 8 16" className="h-4 w-2 shrink-0" fill="none" stroke="#000" aria-hidden="true">
    {first ? <path d="M.5 0l7 15" /> : <path d="M7.500 0L.5 15M4 8l3.500 7" />}
  </svg>
);

const SheetTabs = () => (
  <div className="flex h-[17px] shrink-0 bg-[#ece9d8]">
    <div className="flex min-w-0 flex-[464] items-stretch overflow-hidden border-t border-[#808080]">
      <NavButton label="Первый лист" d="M1 0h1v7H1zM6 0v7L2.500 3.500z" />
      <NavButton label="Предыдущий лист" d="M5.500 0v7L2 3.500z" />
      <NavButton label="Следующий лист" d="M2.500 0v7L6 3.500z" />
      <NavButton label="Последний лист" d="M6 0h1v7H6zM2 0v7l3.500-3.500z" />
      <TabEdge first />
      {['Отчет по результатам 1', 'Отчет по устойчивости 1', 'Отчет по пределам 1'].map((tab) => (
        <div key={tab} className="flex shrink-0">
          <button
            type="button"
            className="border-b border-[#808080] px-[9px] text-[12px] leading-4 whitespace-nowrap"
          >
            {tab}
          </button>
          <TabEdge />
        </div>
      ))}
    </div>
    <div className="w-[6px] shrink-0 border-r-2 border-l border-black border-l-[#aca899] bg-[#ece9d8]" />
    <div className="flex min-w-0 flex-[273] bg-[#f4f3ee]">
      <ScrollButton label="Влево" d="M6 1L2.500 4.500 6 8" />
      <div className="flex min-w-0 flex-1 pl-px">
        <div className="flex h-4 basis-[75%] items-center justify-center gap-px rounded-[2px] border border-white bg-linear-to-b from-[#c9d8fc] to-[#b9cdfa] shadow-[inset_0_0_0_1px_#b0c6f4]">
          {[0, 1, 2, 3].map((i) => (
            <span key={i} className="h-[7px] w-px bg-[#eef4fe] shadow-[1px_0_0_#8cb0f8]" />
          ))}
        </div>
      </div>
      <ScrollButton label="Вправо" d="M3 1l3.500 3.500L3 8" />
    </div>
    <div className="flex w-[23px] shrink-0">
      <span className="ml-[2px] w-1 border-r border-l border-r-black border-l-[#aca899]" />
    </div>
  </div>
);

const StatusBar = () => (
  <footer className="flex h-[21px] shrink-0 items-center gap-px border-t border-white bg-[#ece9d8] text-black">
    <span className="flex-1 pl-[3px] leading-4">Готово</span>
    <span className="h-4 w-[34px] border border-[#d2cfc8]" />
    <span className="h-4 w-28 border border-[#d2cfc8]" />
    <span className="h-4 w-[26px] border border-[#d2cfc8]" />
    <span className="h-4 w-[30px] border border-[#d2cfc8]" />
    <span className="flex h-4 w-[26px] items-center justify-center border border-[#d2cfc8] leading-3">NUM</span>
    <span className="h-4 w-[29px] border border-[#d2cfc8]" />
    <span className="h-4 w-[26px] border border-[#d2cfc8]" />
    <span className="h-4 w-[33px] border border-[#d2cfc8]" />
    <svg viewBox="0 0 20 16" className="h-4 w-5" aria-hidden="true">
      <path d="M17 4h2v2h-2zM17 8h2v2h-2zM13 8h2v2h-2zM17 12h2v2h-2zM13 12h2v2h-2zM9 12h2v2H9z" fill="#b8b4a2" />
    </svg>
  </footer>
);

export default function App() {
  return (
    <div className="flex h-screen flex-col overflow-hidden rounded-t-[6px] bg-[#0a50ea] font-['DejaVu_Sans_Condensed','DejaVu_Sans',Tahoma,sans-serif] text-[11px] text-black shadow-[inset_0_0_0_2px_#0019b4]">
      <TitleBar />
      <main className="mr-1 mb-1 ml-[5px] flex min-h-0 flex-1 flex-col">
        <div className="bg-linear-to-r from-[#9ebef5] to-[#c4dafa] pb-px">
          <MenuBar />
          <div className="flex flex-col gap-px">
            <StandardToolbar />
            <ReviewToolbar />
          </div>
          <FormulaBar />
        </div>
        <div className="flex min-h-0 flex-1 border-t-2 border-[#808080] bg-white">
          <Sheet />
          <VerticalScroll />
        </div>
        <SheetTabs />
        <StatusBar />
      </main>
    </div>
  );
}
